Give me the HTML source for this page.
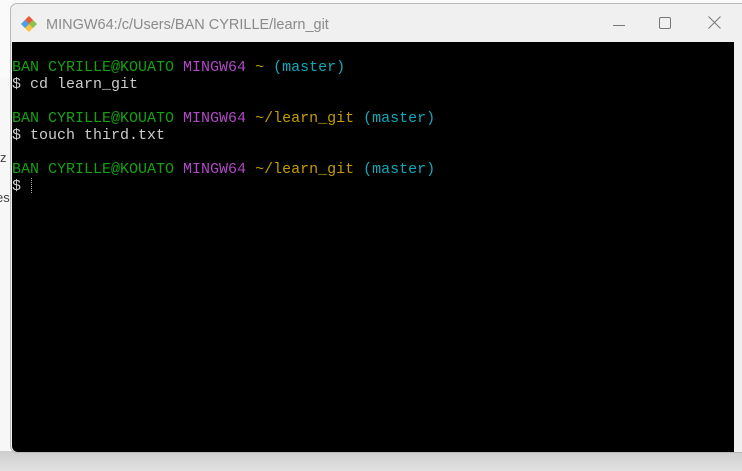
<!DOCTYPE html>
<html><head><style>
html,body{margin:0;padding:0;width:742px;height:471px;overflow:hidden;background:#f3f3f3;position:relative;font-family:"Liberation Sans",sans-serif}
.bgtop{position:absolute;left:0;top:0;width:742px;height:78px;background:#fafafa}
.bgmid{position:absolute;left:0;top:78px;width:12px;height:393px;background:#f7f7f7}
.shadow{position:absolute;left:0;top:451px;width:742px;height:20px;background:linear-gradient(#cdcdcd,#e2e2e2)}
.win{position:absolute;left:10px;top:3px;width:740px;height:448px;background:#f0f0f0;border:1px solid #b8b8b8;border-radius:7px 7px 0 7px;overflow:hidden}
.title{position:absolute;left:35px;top:13px;font-size:14.5px;color:#8a8a8a}
.term{position:absolute;left:1px;top:38px;width:722px;height:410px;background:#000;border-bottom-left-radius:6px}
.sb{position:absolute;left:723px;top:38px;width:17px;height:410px;background:#f0f0f0}
pre{margin:0;position:absolute;left:0px;top:17px;font-family:"Liberation Mono",monospace;font-size:15px;line-height:17px;color:#cccccc}
.g{color:#13a10e}.m{color:#b148c6}.y{color:#c19c00}.c{color:#11a8b8}
.cur{display:inline-block;width:1px;height:15px;border-left:1px dotted #aaa;vertical-align:-3px;margin-left:-8px}
</style></head><body>
<div class="bgtop"></div><div class="bgmid"></div>
<div style="position:absolute;left:0;top:150px;font-size:13px;color:#444">z</div>
<div style="position:absolute;left:-4px;top:190px;font-size:13px;color:#444">es</div>
<div class="shadow"></div>
<div class="win">
<svg style="position:absolute;left:9px;top:11px" width="18" height="18" viewBox="0 0 18 18">
<polygon points="9,1 17,9 9,17 1,9" fill="#f5c242"/>
<polygon points="9,1 13,5 9,9 5,5" fill="#e9573f"/>
<polygon points="1,9 5,5 9,9 5,13" fill="#4a9fe8"/>
<polygon points="13,5 17,9 13,13 9,9" fill="#8cc152"/>
</svg>
<div class="title">MINGW64:/c/Users/BAN CYRILLE/learn_git</div>
<div style="position:absolute;left:602px;top:21px;width:12px;height:1px;background:#777"></div>
<div style="position:absolute;left:648px;top:13px;width:10px;height:10px;border:1px solid #777;border-radius:2px"></div>
<svg style="position:absolute;left:697px;top:12px" width="13" height="13"><path d="M0.5 0.5L12.5 12.5M12.5 0.5L0.5 12.5" stroke="#777" stroke-width="1"/></svg>
<div class="term"><pre><span class="g">BAN CYRILLE@KOUATO</span> <span class="m">MINGW64</span> <span class="y">~</span> <span class="c">(master)</span>
$ cd learn_git

<span class="g">BAN CYRILLE@KOUATO</span> <span class="m">MINGW64</span> <span class="y">~/learn_git</span> <span class="c">(master)</span>
$ touch third.txt

<span class="g">BAN CYRILLE@KOUATO</span> <span class="m">MINGW64</span> <span class="y">~/learn_git</span> <span class="c">(master)</span>
$  <span class="cur"></span></pre></div>
<div class="sb"></div>
</div>
</body></html>
